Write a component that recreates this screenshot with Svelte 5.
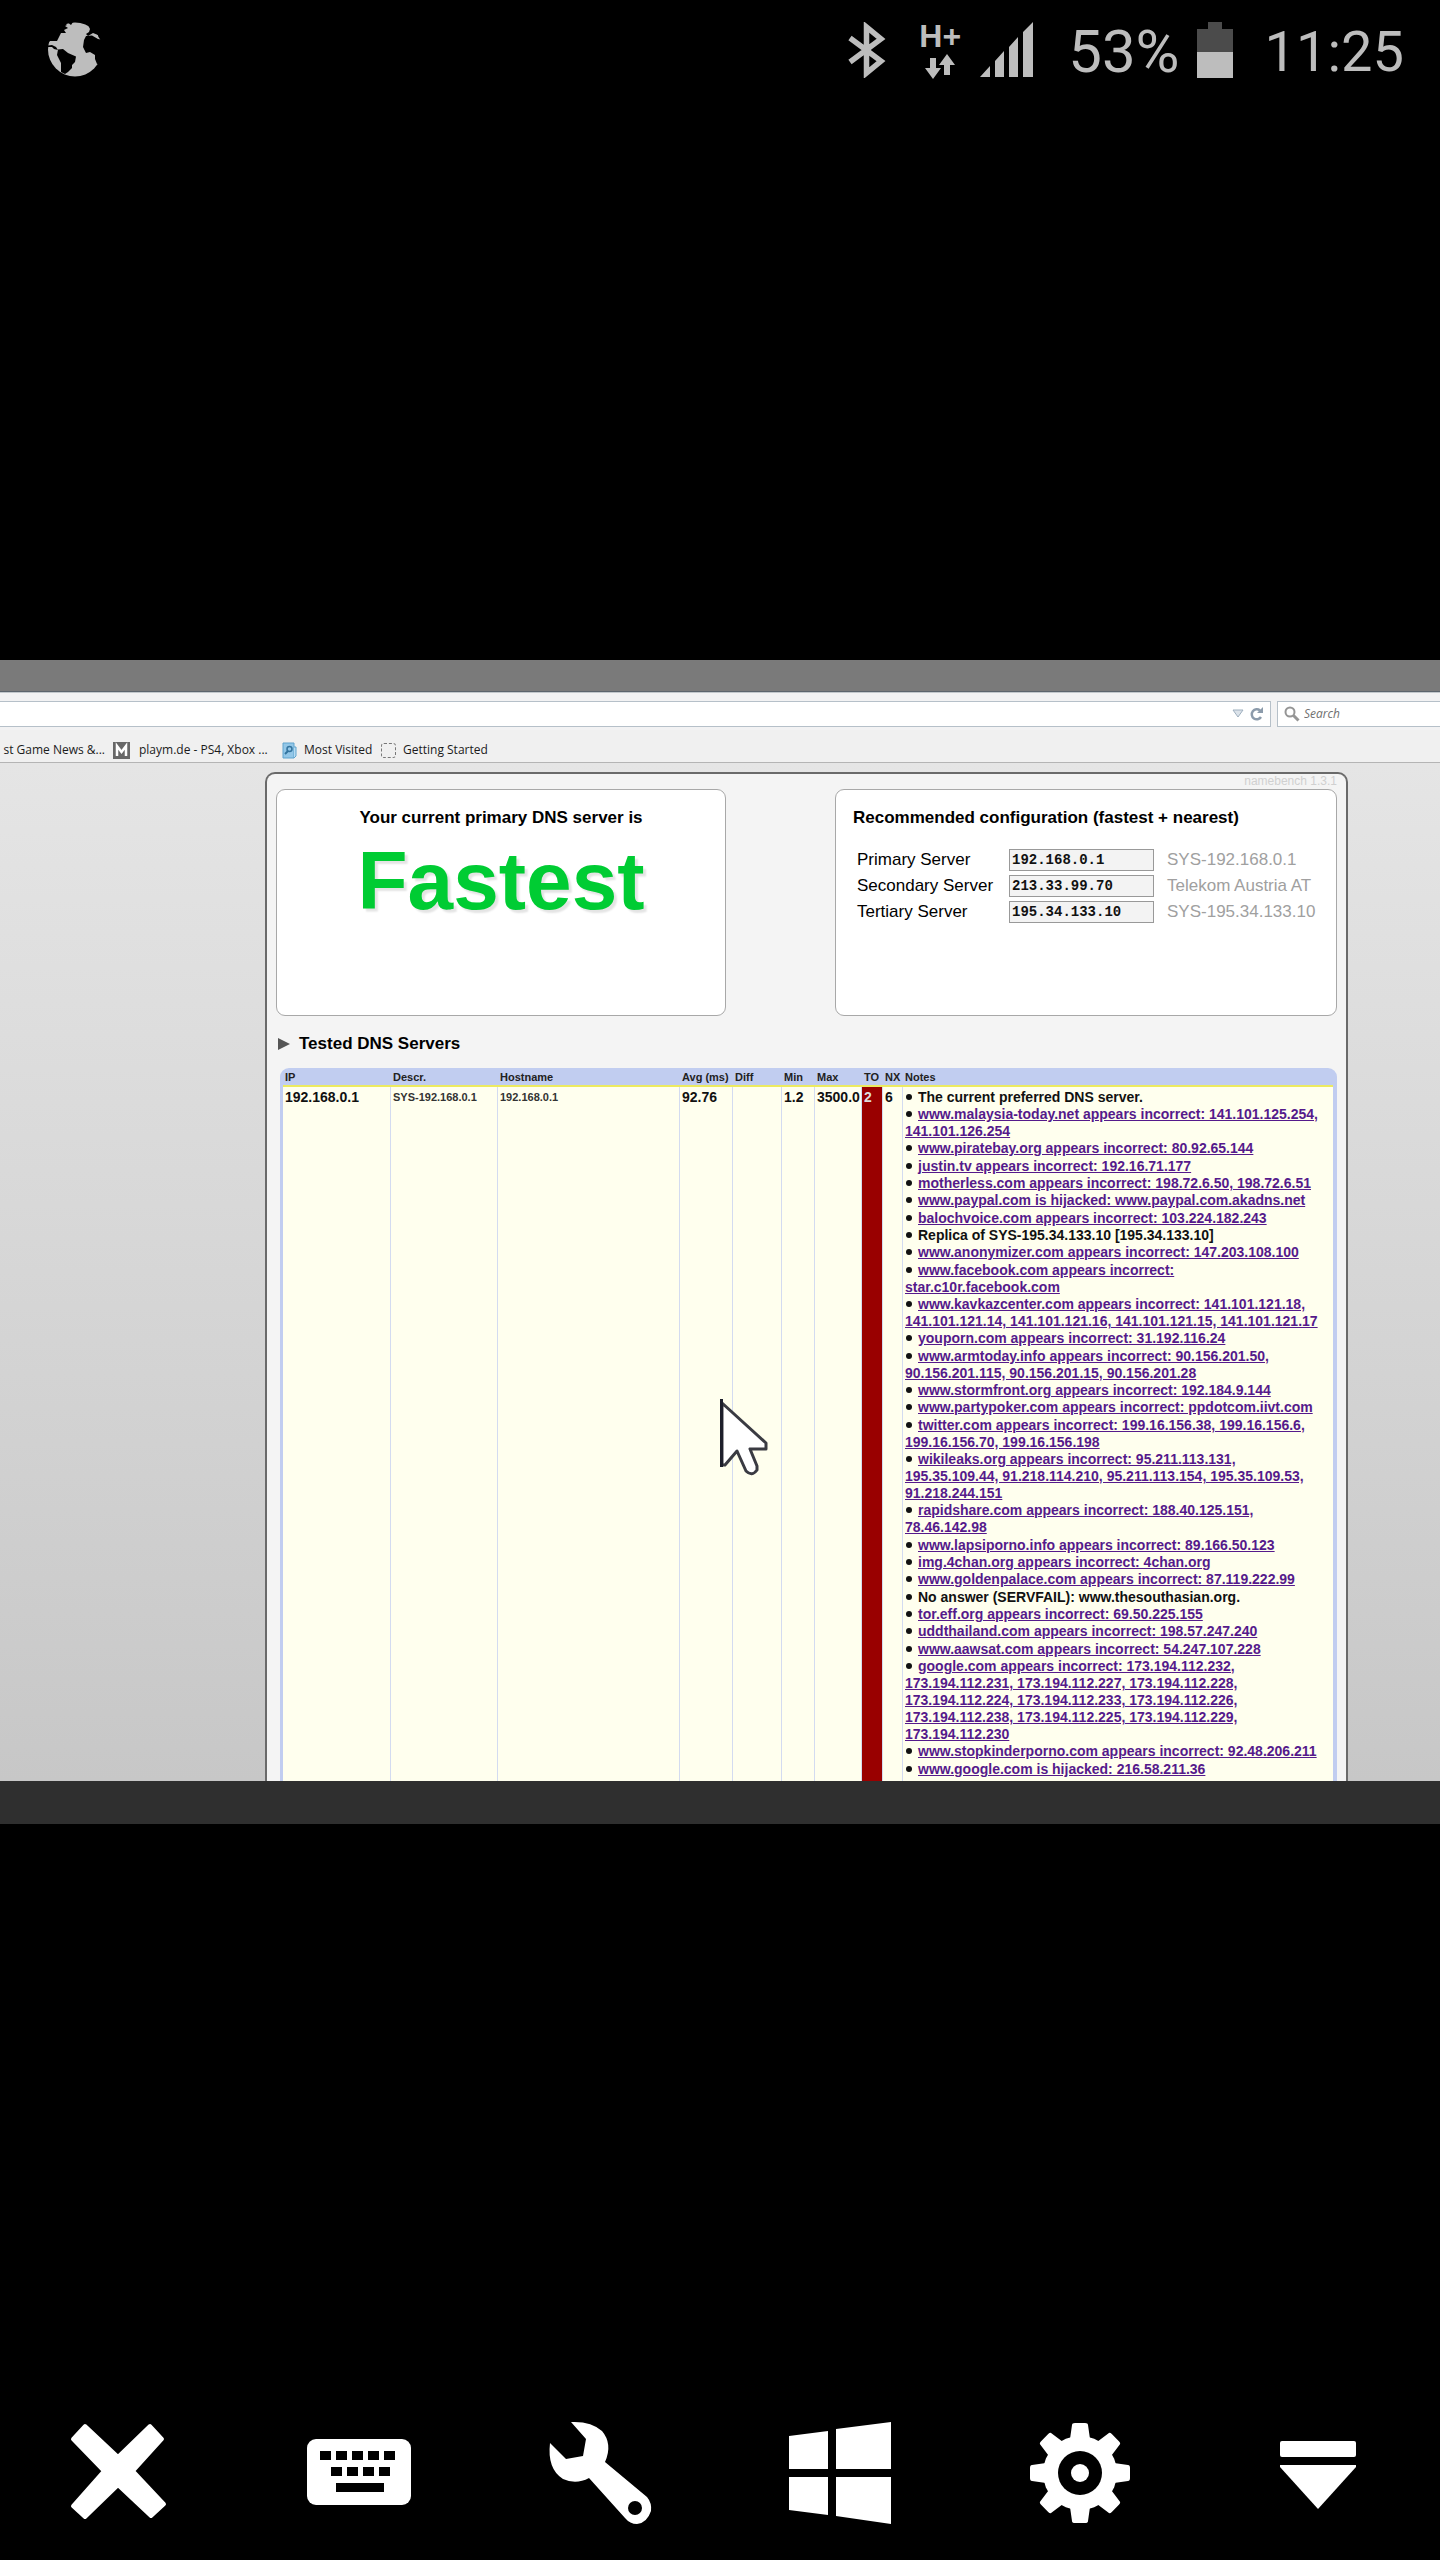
<script lang="ts">
  type Server = { id: string; label: string; ip: string; name: string };
  type Note = { text: string; link?: boolean };

  const servers: Server[] = [
    { id: "primary", label: "Primary Server", ip: "192.168.0.1", name: "SYS-192.168.0.1" },
    { id: "secondary", label: "Secondary Server", ip: "213.33.99.70", name: "Telekom Austria AT" },
    { id: "tertiary", label: "Tertiary Server", ip: "195.34.133.10", name: "SYS-195.34.133.10" },
  ];

  const notes: Note[] = [
    { text: "The current preferred DNS server." },
    { text: "www.malaysia-today.net appears incorrect: 141.101.125.254, 141.101.126.254", link: true },
    { text: "www.piratebay.org appears incorrect: 80.92.65.144", link: true },
    { text: "justin.tv appears incorrect: 192.16.71.177", link: true },
    { text: "motherless.com appears incorrect: 198.72.6.50, 198.72.6.51", link: true },
    { text: "www.paypal.com is hijacked: www.paypal.com.akadns.net", link: true },
    { text: "balochvoice.com appears incorrect: 103.224.182.243", link: true },
    { text: "Replica of SYS-195.34.133.10 [195.34.133.10]" },
    { text: "www.anonymizer.com appears incorrect: 147.203.108.100", link: true },
    { text: "www.facebook.com appears incorrect: star.c10r.facebook.com", link: true },
    { text: "www.kavkazcenter.com appears incorrect: 141.101.121.18, 141.101.121.14, 141.101.121.16, 141.101.121.15, 141.101.121.17", link: true },
    { text: "youporn.com appears incorrect: 31.192.116.24", link: true },
    { text: "www.armtoday.info appears incorrect: 90.156.201.50, 90.156.201.115, 90.156.201.15, 90.156.201.28", link: true },
    { text: "www.stormfront.org appears incorrect: 192.184.9.144", link: true },
    { text: "www.partypoker.com appears incorrect: ppdotcom.iivt.com", link: true },
    { text: "twitter.com appears incorrect: 199.16.156.38, 199.16.156.6, 199.16.156.70, 199.16.156.198", link: true },
    { text: "wikileaks.org appears incorrect: 95.211.113.131, 195.35.109.44, 91.218.114.210, 95.211.113.154, 195.35.109.53, 91.218.244.151", link: true },
    { text: "rapidshare.com appears incorrect: 188.40.125.151, 78.46.142.98", link: true },
    { text: "www.lapsiporno.info appears incorrect: 89.166.50.123", link: true },
    { text: "img.4chan.org appears incorrect: 4chan.org", link: true },
    { text: "www.goldenpalace.com appears incorrect: 87.119.222.99", link: true },
    { text: "No answer (SERVFAIL): www.thesouthasian.org." },
    { text: "tor.eff.org appears incorrect: 69.50.225.155", link: true },
    { text: "uddthailand.com appears incorrect: 198.57.247.240", link: true },
    { text: "www.aawsat.com appears incorrect: 54.247.107.228", link: true },
    { text: "google.com appears incorrect: 173.194.112.232, 173.194.112.231, 173.194.112.227, 173.194.112.228, 173.194.112.224, 173.194.112.233, 173.194.112.226, 173.194.112.238, 173.194.112.225, 173.194.112.229, 173.194.112.230", link: true },
    { text: "www.stopkinderporno.com appears incorrect: 92.48.206.211", link: true },
    { text: "www.google.com is hijacked: 216.58.211.36", link: true },
  ];

  const teeth = [0, 45, 90, 135, 180, 225, 270, 315];
</script>

<div class="device">
  <header class="status">
    <svg class="globe" width="54" height="56" viewBox="0 0 54 56" aria-hidden="true">
      <circle cx="27" cy="27.5" r="27" fill="#bdbdbd" />
      <g fill="#000">
        <path d="M0 0H16L19 3L17 4L20 6L16 8L18 11L13 11L9 19H2L0 21Z" />
        <path d="M19 0L23 3L25 0Z" />
        <path d="M0 23.500L4 23L8 25L10 28L6 27L4 25L0 25Z" />
        <path d="M10 27.500L15 27L20 31L28 34.500L27 40L24 43L24 46L20 50L17 52L13 50L13 41L9 33Z" />
        <path d="M38 14L44 13.500L50 17L55 18V41L49 42L47 37L47 33L42 30L38 31L35 25L36 18Z" />
        <path d="M39 1L42 7L41 10L38 12L40 14L45 11L50 13L51 16L55 17V0Z" />
      </g>
    </svg>
    <div class="indicators">
      <svg width="38" height="56" viewBox="0 0 38 56" aria-hidden="true">
        <path d="M2 16L33 39L18.500 51V5L33 17L2 40" fill="none" stroke="#bdbdbd" stroke-width="5.500" />
      </svg>
      <div class="network">
        <span>H+</span>
        <svg width="32" height="25" viewBox="0 0 32 25" fill="#bdbdbd" aria-hidden="true">
          <path d="M6 4H12V14H17L9 25L1 14H6Z" />
          <path d="M20 21H26V11H31L23 0L15 11H20Z" />
        </svg>
      </div>
      <svg class="signal" width="54" height="56" viewBox="0 0 54 56" fill="#bdbdbd" aria-hidden="true">
        <path d="M0 55L10 44V55ZM15 39L24 29V55H15ZM29 25L38 15V55H29ZM43 10L53 0V55H43Z" />
      </svg>
      <span class="percent">53%</span>
      <svg width="36" height="56" viewBox="0 0 36 56" shape-rendering="crispEdges" aria-hidden="true">
        <path d="M11 0H25V7H36V30H0V7H11Z" fill="#4b4b4b" />
        <path d="M0 30H36V56H0Z" fill="#bdbdbd" />
      </svg>
      <time class="clock">11:25</time>
    </div>
  </header>

  <main class="stage">
    <div class="remote">
      <div class="titlebar"></div>
      <nav class="navbar">
        <div class="address">
          <input type="text" aria-label="Address" />
          <svg width="12" height="10" viewBox="0 0 12 10" aria-hidden="true">
            <path d="M1 1H11L6 8Z" fill="#dce3ea" stroke="#9fb0bf" />
          </svg>
          <button aria-label="Reload">
            <svg width="14" height="14" viewBox="0 0 14 14" aria-hidden="true">
              <path d="M11 10A5 5 0 1 1 10 3.500" fill="none" stroke="#8c9bab" stroke-width="2.500" />
              <path d="M7 6H13V0Z" fill="#8c9bab" />
            </svg>
          </button>
        </div>
        <label class="search">
          <svg width="16" height="16" viewBox="0 0 16 16" fill="none" stroke="#959595" aria-hidden="true">
            <circle cx="6" cy="6" r="4.500" stroke-width="2" />
            <path d="M9.500 9.500L14.500 14.500" stroke-width="3" />
          </svg>
          <input type="text" placeholder="Search" aria-label="Search" />
        </label>
      </nav>
      <div class="bookmarks">
        <a class="cut" href="#news">st Game News &amp;...</a>
        <a class="playm" href="#playm">
          <svg width="17" height="17" viewBox="0 0 17 17" aria-hidden="true">
            <path d="M0 0H17V17H0Z" fill="#686868" />
            <path d="M4 14V4L8.500 10L13 4V14" fill="none" stroke="#fff" stroke-width="2.500" />
          </svg>
          playm.de - PS4, Xbox ...
        </a>
        <a class="visited" href="#visited">
          <svg width="15" height="17" viewBox="0 0 15 17" aria-hidden="true">
            <path d="M1 1H12V16H1Z" fill="#93c7e8" stroke="#5fa3cd" />
            <path d="M12 5H14V14L12 16" fill="#b8dcf2" stroke="#5fa3cd" />
            <circle cx="7.500" cy="7" r="2.500" fill="none" stroke="#33749f" stroke-width="1.500" />
            <path d="M6 9L3 12" stroke="#33749f" stroke-width="2" />
          </svg>
          Most Visited
        </a>
        <a class="started" href="#started"><i class="blank"></i>Getting Started</a>
      </div>

      <div class="page">
        <section class="report">
          <p class="version">namebench 1.3.1</p>
          <div class="cards">
            <div class="card current">
              <h2>Your current primary DNS server is</h2>
              <strong>Fastest</strong>
            </div>
            <div class="card recommended">
              <h2>Recommended configuration (fastest + nearest)</h2>
              <div class="servers">
                {#each servers as server}
                  <label for={server.id}>{server.label}</label>
                  <input id={server.id} type="text" value={server.ip} />
                  <span>{server.name}</span>
                {/each}
              </div>
            </div>
          </div>

          <h2 class="tested">
            <svg width="12" height="12" viewBox="0 0 12 12" aria-hidden="true"><path d="M0 0L12 6L0 12Z" fill="#555" /></svg>
            Tested DNS Servers
          </h2>

          <div class="results">
            <table>
              <colgroup>
                <col class="c-ip" /><col class="c-descr" /><col class="c-host" /><col class="c-avg" /><col class="c-diff" />
                <col class="c-min" /><col class="c-max" /><col class="c-to" /><col class="c-nx" /><col />
              </colgroup>
              <thead>
                <tr>
                  <th>IP</th><th>Descr.</th><th>Hostname</th><th>Avg (ms)</th><th>Diff</th>
                  <th>Min</th><th>Max</th><th>TO</th><th>NX</th><th>Notes</th>
                </tr>
              </thead>
              <tbody>
                <tr>
                  <td>192.168.0.1</td>
                  <td class="small">SYS-192.168.0.1</td>
                  <td class="small">192.168.0.1</td>
                  <td>92.76</td>
                  <td></td>
                  <td>1.2</td>
                  <td>3500.0</td>
                  <td class="timeout">2</td>
                  <td>6</td>
                  <td>
                    <ul>
                      {#each notes as note}
                        <li>
                          {#if note.link}<a href="#note">{note.text}</a>{:else}{note.text}{/if}
                        </li>
                      {/each}
                    </ul>
                  </td>
                </tr>
              </tbody>
            </table>
          </div>
        </section>

        <svg class="cursor" width="52" height="80" viewBox="0 0 52 80" aria-hidden="true">
          <path d="M2 4V66H5L17 52L26 72Q32 78 37 71V67L30 50H46V44Z" fill="#fff" stroke="#3a3b42" stroke-width="3" stroke-linejoin="round" />
          <path d="M1.500 0V68" stroke="#1d1f2b" stroke-width="3" />
        </svg>
      </div>
      <div class="taskbar"></div>
    </div>
  </main>

  <footer class="tools">
    <button aria-label="Close">
      <svg width="112" height="112" viewBox="0 0 112 112">
        <path d="M21 9L9 22L40 54L9 89L21 100L54 68L87 99L100 87L69 54L98 22L86 9L54 40Z" fill="#fff" stroke="#fff" stroke-width="4" stroke-linejoin="round" />
      </svg>
    </button>
    <button aria-label="Keyboard">
      <svg width="112" height="112" viewBox="0 0 112 112">
        <rect x="3" y="22" width="104" height="66" rx="9" fill="#fff" />
        <path d="M16 34h11v9h-11zM32 34h11v9h-11zM48 34h11v9h-11zM64 34h11v9h-11zM80 34h11v9h-11zM27 50h11v9h-11zM43 50h11v9h-11zM59 50h11v9h-11zM75 50h11v9h-11zM32 66h48v9h-48z" fill="#000" />
      </svg>
    </button>
    <button aria-label="Tools">
      <svg width="112" height="112" viewBox="0 0 112 112">
        <path d="M27 5Q47 4 58 14Q69 27 61 45L103 80Q108 86 107 94Q103 106 93 107Q86 107 81 101L45 61Q32 68 19 62Q3 52 6 26L22 42L39 39L42 22Z" fill="#fff" />
        <circle cx="91" cy="91" r="7" fill="#000" />
      </svg>
    </button>
    <button aria-label="Windows">
      <svg width="112" height="112" viewBox="0 0 112 112" fill="#fff">
        <path d="M5 19L44 14V52H5ZM52 12L107 5V52H52ZM5 60H44V98L5 93ZM52 60H107V107L52 99Z" />
      </svg>
    </button>
    <button aria-label="Settings">
      <svg width="112" height="112" viewBox="0 0 112 112" fill="#fff">
        {#each teeth as angle}
          <path d="M43 28L46 22L48 8Q48 6 51 6H61Q64 6 64 8L66 22L69 28Z" transform="rotate({angle} 56 56)" />
        {/each}
        <circle cx="56" cy="56" r="37" />
        <circle cx="56" cy="56" r="22" fill="#000" />
        <circle cx="56" cy="56" r="9" />
      </svg>
    </button>
    <button aria-label="Hide toolbar">
      <svg width="112" height="112" viewBox="0 0 112 112" fill="#fff">
        <rect x="16" y="24" width="76" height="16" rx="2" />
        <path d="M16 48H92V50L54 92L16 50Z" />
      </svg>
    </button>
  </footer>
</div>

<style>
  :global(body) {
    background: #000;
  }

  .device {
    display: flex;
    flex-direction: column;
    min-height: 100vh;
    background: #000;
    font-family: "Liberation Sans", Arial, sans-serif;
  }

  svg {
    display: block;
    flex: none;
  }

  h2,
  p,
  ul {
    margin: 0;
    padding: 0;
  }

  button {
    padding: 0;
    border: 0;
    background: none;
    cursor: pointer;
  }

  input {
    box-sizing: border-box;
    min-width: 0;
    margin: 0;
    border: 0;
    border-radius: 0;
    outline: none;
  }

  /* phone status bar */
  .status {
    display: flex;
    justify-content: space-between;
    align-items: center;
    height: 100px;
    padding: 0 36px 0 48px;
    box-sizing: border-box;
    color: #bdbdbd;
  }

  .indicators {
    display: flex;
    align-items: center;
  }

  .network {
    display: flex;
    flex-direction: column;
    align-items: center;
    gap: 4px;
    width: 40px;
    margin: 0 20px 0 34px;
    font-size: 32px;
    font-weight: bold;
    line-height: 28px;
  }

  .percent,
  .clock {
    font-family: Roboto, sans-serif;
    font-size: 56px;
    line-height: 64px;
  }

  .percent {
    margin: 4px 17px 0 34px;
    font-size: 60px;
  }

  .clock {
    margin: 4px 0 0 32px;
  }

  .stage {
    display: flex;
    flex: 1;
    flex-direction: column;
    justify-content: center;
  }

  /* remote browser window */
  .titlebar {
    height: 31px;
    border-bottom: 1px solid #5c646c;
    background: #7a7a7a;
  }

  .navbar {
    display: flex;
    gap: 6px;
    padding: 8px 0 3px;
    border-top: 1px solid #c3c8cc;
    background: #f2f2f3;
  }

  .address,
  .search {
    display: flex;
    align-items: center;
    height: 26px;
    box-sizing: border-box;
    border: 1px solid #b6c0c9;
    background: #fff;
  }

  .address {
    flex: 1;
    gap: 6px;
    padding-right: 6px;
    border-left: 0;
  }

  .address input {
    flex: 1;
  }

  .search {
    width: 163px;
    gap: 4px;
    padding-left: 6px;
    border-right: 0;
  }

  .search input {
    flex: 1;
    padding: 0;
    font: italic 12px/20px "Open Sans", sans-serif;
  }

  .search input::placeholder {
    color: #707070;
    opacity: 1;
  }

  .bookmarks {
    display: flex;
    align-items: center;
    height: 24px;
    padding-top: 8px;
    border-bottom: 1px solid #b4b4b4;
    background: #f0f0f0;
    font: 12px/20px "Open Sans", sans-serif;
  }

  .bookmarks a {
    display: flex;
    align-items: center;
    color: #1b1b1b;
    text-decoration: none;
    white-space: nowrap;
  }

  .bookmarks .cut {
    justify-content: flex-end;
    width: 105px;
    margin-right: 8px;
  }

  .playm {
    width: 169px;
    gap: 9px;
  }

  .visited {
    width: 99px;
    gap: 7px;
  }

  .started {
    gap: 7px;
  }

  .blank {
    width: 13px;
    height: 13px;
    border: 1px dashed #777;
    border-radius: 3px;
  }

  .page {
    position: relative;
    padding: 9px 92px 0 265px;
    background: linear-gradient(#e5e5e5, #c7c7c7);
  }

  .report {
    padding: 0 9px;
    border: 2px solid #6a6a6a;
    border-bottom: 0;
    border-radius: 10px 10px 0 0;
    background: #f4f4f4;
  }

  .version {
    color: #d0d0d0;
    font-size: 12px;
    line-height: 15px;
    text-align: right;
  }

  .cards {
    display: flex;
    justify-content: space-between;
  }

  .card {
    height: 227px;
    box-sizing: border-box;
    border: 1px solid #a8a8a8;
    border-radius: 9px;
    background: #fff;
  }

  h2 {
    font-size: 17px;
    line-height: 20px;
  }

  .current {
    width: 450px;
    padding-top: 18px;
    text-align: center;
  }

  .current strong {
    display: block;
    padding-top: 7px;
    color: #00cc33;
    font-size: 82px;
    line-height: 92px;
    text-shadow: 3px 3px 2px #e4e4e4;
  }

  .recommended {
    width: 502px;
    padding: 18px 0 0 17px;
  }

  .servers {
    display: grid;
    grid-template-columns: 152px 145px 1fr;
    row-gap: 4px;
    margin-top: 21px;
    padding-left: 4px;
    font-size: 17px;
    line-height: 22px;
  }

  .servers input {
    height: 22px;
    padding: 0 2px;
    border: 1px solid #999;
    background: #f3f3f3;
    color: #111;
    font: bold 14px/20px "Liberation Mono", monospace;
  }

  .servers span {
    padding-left: 13px;
    color: #a0a0a0;
  }

  .tested {
    display: flex;
    align-items: center;
    gap: 9px;
    padding: 18px 0 14px 2px;
  }

  /* result table */
  .results {
    margin-left: 4px;
    padding: 0 4px 0 3px;
    border-radius: 9px 9px 0 0;
    background: #c1cdf0;
  }

  table {
    width: 100%;
    border-spacing: 0;
    table-layout: fixed;
  }

  th {
    padding: 1px 0 0 2px;
    border-bottom: 2px solid #ecea60;
    color: #222;
    font-size: 11px;
    line-height: 16px;
    text-align: left;
    white-space: nowrap;
  }

  td {
    padding: 2px 0 3px 2px;
    border-right: 1px solid #d3dbf0;
    background: #ffffee;
    color: #111;
    font-size: 14px;
    font-weight: bold;
    line-height: 17px;
    vertical-align: top;
  }

  td:last-child {
    padding-right: 6px;
    border-right: 0;
  }

  td.small {
    font-size: 11px;
    color: #333;
  }

  td.timeout {
    background: #990000;
    color: #ddd;
  }

  .c-ip {
    width: 108px;
  }

  .c-descr {
    width: 107px;
  }

  .c-host {
    width: 182px;
  }

  .c-avg {
    width: 53px;
  }

  .c-diff {
    width: 49px;
  }

  .c-min {
    width: 33px;
  }

  .c-max {
    width: 47px;
  }

  .c-to {
    width: 21px;
  }

  .c-nx {
    width: 20px;
  }

  ul {
    list-style: none;
  }

  li:nth-child(3n) {
    padding-bottom: 1px;
  }

  li::before {
    content: "";
    display: inline-block;
    width: 6px;
    height: 6px;
    margin: 0 6px 2px 1px;
    border-radius: 50%;
    background: #111;
  }

  li a {
    color: #551a8b;
  }

  /* pointer floats over the page */
  .cursor {
    position: absolute;
    top: 636px;
    left: 50%;
  }

  .taskbar {
    height: 43px;
    background: #2f2f2f;
  }

  .tools {
    display: grid;
    grid-template-columns: repeat(6, 1fr);
    height: 174px;
    padding-top: 2px;
  }

  .tools button {
    display: flex;
    justify-content: center;
    align-items: center;
  }
</style>
